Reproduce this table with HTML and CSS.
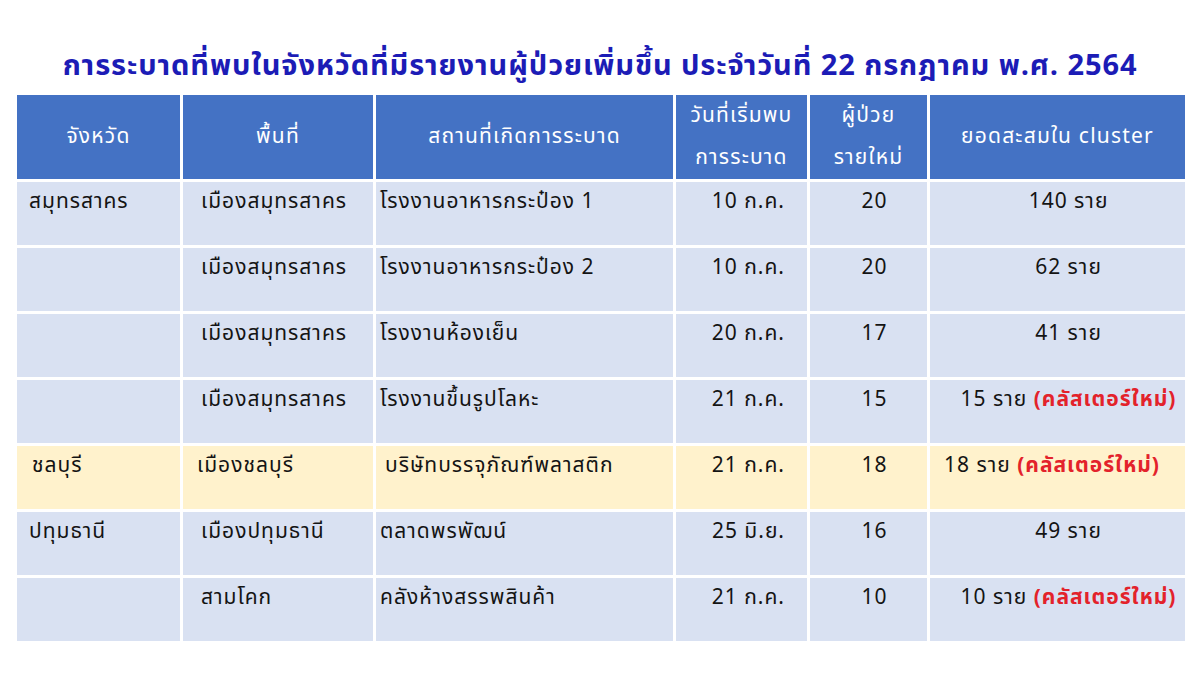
FILE: index.html
```html
<!DOCTYPE html>
<html lang="th">
<head>
<meta charset="utf-8">
<link rel="stylesheet" href="styles.css">
</head>
<body>
<div class="page">
  <h1 class="title">การระบาดที่พบในจังหวัดที่มีรายงานผู้ป่วยเพิ่มขึ้น ประจำวันที่ 22 กรกฎาคม พ.ศ. 2564</h1>
  <table class="tbl">
    <colgroup>
      <col class="c1"><col class="c2"><col class="c3"><col class="c4"><col class="c5"><col class="c6">
    </colgroup>
    <thead>
      <tr>
        <th>จังหวัด</th>
        <th>พื้นที่</th>
        <th>สถานที่เกิดการระบาด</th>
        <th>วันที่เริ่มพบ<br>การระบาด</th>
        <th>ผู้ป่วย<br>รายใหม่</th>
        <th>ยอดสะสมใน cluster</th>
      </tr>
    </thead>
    <tbody>
      <tr>
        <td class="prov">สมุทรสาคร</td>
        <td class="area">เมืองสมุทรสาคร</td>
        <td class="place">โรงงานอาหารกระป๋อง 1</td>
        <td class="date">10 ก.ค.</td>
        <td class="num">20</td>
        <td class="total">140 ราย</td>
      </tr>
      <tr>
        <td class="prov"></td>
        <td class="area">เมืองสมุทรสาคร</td>
        <td class="place">โรงงานอาหารกระป๋อง 2</td>
        <td class="date">10 ก.ค.</td>
        <td class="num">20</td>
        <td class="total">62 ราย</td>
      </tr>
      <tr>
        <td class="prov"></td>
        <td class="area">เมืองสมุทรสาคร</td>
        <td class="place">โรงงานห้องเย็น</td>
        <td class="date">20 ก.ค.</td>
        <td class="num">17</td>
        <td class="total">41 ราย</td>
      </tr>
      <tr>
        <td class="prov"></td>
        <td class="area">เมืองสมุทรสาคร</td>
        <td class="place">โรงงานขึ้นรูปโลหะ</td>
        <td class="date">21 ก.ค.</td>
        <td class="num">15</td>
        <td class="total">15 ราย <span class="new">(คลัสเตอร์ใหม่)</span></td>
      </tr>
      <tr class="hl">
        <td class="prov">ชลบุรี</td>
        <td class="area">เมืองชลบุรี</td>
        <td class="place">บริษัทบรรจุภัณฑ์พลาสติก</td>
        <td class="date">21 ก.ค.</td>
        <td class="num">18</td>
        <td class="total">18 ราย <span class="new">(คลัสเตอร์ใหม่)</span></td>
      </tr>
      <tr>
        <td class="prov">ปทุมธานี</td>
        <td class="area">เมืองปทุมธานี</td>
        <td class="place">ตลาดพรพัฒน์</td>
        <td class="date">25 มิ.ย.</td>
        <td class="num">16</td>
        <td class="total">49 ราย</td>
      </tr>
      <tr>
        <td class="prov"></td>
        <td class="area">สามโคก</td>
        <td class="place">คลังห้างสรรพสินค้า</td>
        <td class="date">21 ก.ค.</td>
        <td class="num">10</td>
        <td class="total">10 ราย <span class="new">(คลัสเตอร์ใหม่)</span></td>
      </tr>
    </tbody>
  </table>
</div>
</body>
</html>
```
FILE: styles.css
```css
html, body {
  margin: 0;
  padding: 0;
  background: #ffffff;
}
.page {
  width: 1200px;
  height: 675px;
  overflow: hidden;
  font-family: "Noto Sans Thai", Tahoma, "Noto Sans", "DejaVu Sans", sans-serif;
}
.title {
  margin: 0;
  padding-top: 44px;
  height: 48px;
  text-align: center;
  font-size: 29px;
  letter-spacing: 0.9px;
  line-height: 44px;
  font-weight: bold;
  color: #1c1cb6;
  white-space: nowrap;
}
.tbl {
  margin-left: 14px;
  border-collapse: separate;
  border-spacing: 3px;
  table-layout: fixed;
  width: 1174px;
}
.c1 { width: 163px; }
.c2 { width: 190px; }
.c3 { width: 297px; }
.c4 { width: 131px; }
.c5 { width: 117px; }
.c6 { width: 255px; }
th {
  background: #4472c4;
  color: #ffffff;
  font-weight: normal;
  font-size: 21px;
  letter-spacing: 1.2px;
  line-height: 42px;
  height: 83px;
  padding: 0;
  text-align: center;
  vertical-align: middle;
  white-space: nowrap;
}
td {
  background: #d9e1f2;
  color: #141414;
  font-size: 21px;
  letter-spacing: 1px;
  line-height: 30px;
  height: 63px;
  padding: 5px 8px 0;
  box-sizing: border-box;
  vertical-align: top;
  white-space: nowrap;
}
tr.hl td {
  background: #fff2cc;
}
td.prov { padding-left: 12px; }
td.area { padding-left: 18px; }
td.place { padding-left: 4px; }
td.date { text-align: right; padding-right: 22px; }
td.num { text-align: center; padding-left: 20px; }
td.total { text-align: center; padding: 5px 0 0 22px; }
tr.hl td.prov { padding-left: 15px; }
tr.hl td.area { padding-left: 14px; }
tr.hl td.place { padding-left: 9px; }
tr.hl td.total { text-align: left; padding-left: 14px; }
.new {
  color: #e3222b;
  font-weight: bold;
}
```
